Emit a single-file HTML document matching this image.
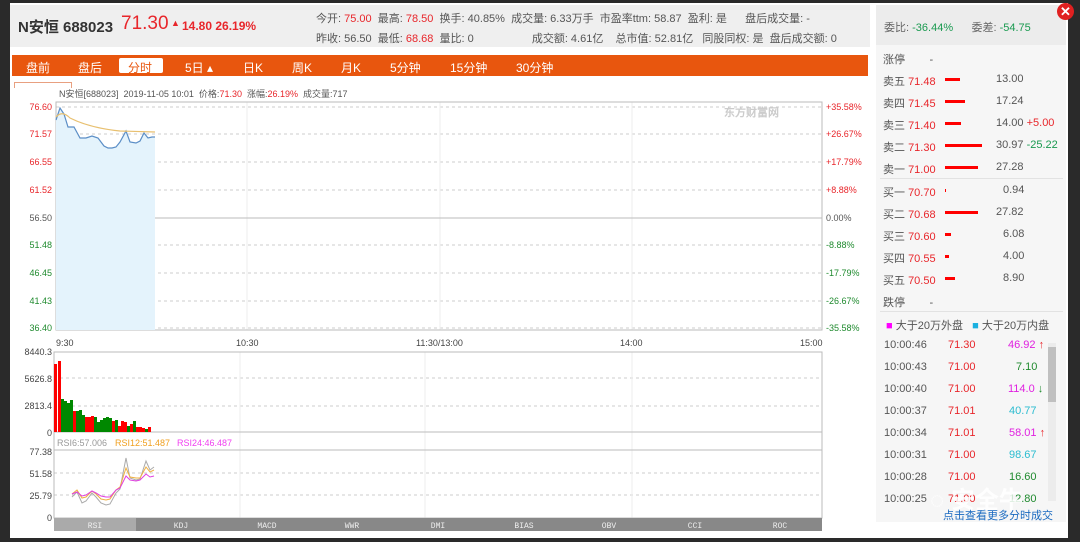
<!DOCTYPE html><html><head><meta charset="utf-8"><style>
*{margin:0;padding:0;box-sizing:border-box}
body{width:1080px;height:542px;background:#2a2a2a;position:relative;overflow:hidden;font-family:"Liberation Sans","Noto Sans CJK SC",sans-serif;font-size:11px;color:#333}
.a{position:absolute;white-space:nowrap}
.r{color:#e8262b}.g{color:#1f8a2e}.m{color:#e020e0}.c{color:#2bbcd0}
.bar{position:absolute;height:3px;background:#f00}
</style></head><body>
<div class="a" style="left:10px;top:3px;width:1058px;height:535px;background:#fff"></div>
<div class="a" style="left:10px;top:5px;width:860px;height:42px;background:#efefef"></div>
<div class="a" style="left:18px;top:16px;font-size:15px;font-weight:bold;color:#333">N安恒 688023</div>
<div class="a r" style="left:121px;top:13px;font-size:19px">71.30</div>
<div class="a r" style="left:171px;top:18px;font-size:9px">▲</div>
<div class="a r" style="left:182px;top:19px;font-size:12px;font-weight:bold">14.80 26.19%</div>
<div class="a" style="left:316px;top:9px;line-height:20px;font-size:11px;color:#555">今开: <span class="r">75.00</span>&nbsp; 最高: <span class="r">78.50</span>&nbsp; 换手: 40.85%&nbsp; 成交量: 6.33万手&nbsp; 市盈率ttm: 58.87&nbsp; 盈利: 是&nbsp;&nbsp;&nbsp;&nbsp;&nbsp; 盘后成交量: -<br>昨收: 56.50&nbsp; 最低: <span class="r">68.68</span>&nbsp; 量比: 0&nbsp;&nbsp;&nbsp;&nbsp;&nbsp;&nbsp;&nbsp;&nbsp;&nbsp;&nbsp;&nbsp;&nbsp;&nbsp;&nbsp;&nbsp;&nbsp;&nbsp;&nbsp; 成交额: 4.61亿&nbsp;&nbsp;&nbsp; 总市值: 52.81亿&nbsp;&nbsp; 同股同权: 是&nbsp; 盘后成交额: 0</div>
<div class="a" style="left:12px;top:55px;width:856px;height:21px;background:#e8560e"></div>
<div class="a" style="left:119px;top:58px;width:44px;height:15px;background:#fff;border-radius:2px"></div>
<div class="a" style="top:59px;left:0;font-size:12px;color:#fff">
<span class="a" style="left:26px">盘前</span><span class="a" style="left:78px">盘后</span><span class="a" style="left:128px;color:#e8560e">分时</span><span class="a" style="left:185px">5日 ▴</span><span class="a" style="left:243px">日K</span><span class="a" style="left:292px">周K</span><span class="a" style="left:341px">月K</span><span class="a" style="left:390px">5分钟</span><span class="a" style="left:450px">15分钟</span><span class="a" style="left:516px">30分钟</span></div>
<div class="a" style="left:14px;top:82px;width:58px;height:6px;border:1px solid #e8a080;border-bottom:none"></div>
<div class="a" style="left:59px;top:87px;font-size:9px;color:#555">N安恒[688023]&nbsp; 2019-11-05 10:01&nbsp; 价格:<span class="r">71.30</span>&nbsp; 涨幅:<span class="r">26.19%</span>&nbsp; 成交量:717</div>
<svg class="a" style="left:0;top:0" width="870" height="542" font-family="Liberation Sans" font-size="9">
<g stroke="#ccc" stroke-dasharray="3,3"><line x1="56" x2="822" y1="134" y2="134"/><line x1="56" x2="822" y1="162" y2="162"/><line x1="56" x2="822" y1="190" y2="190"/><line x1="56" x2="822" y1="245" y2="245"/><line x1="56" x2="822" y1="273" y2="273"/><line x1="56" x2="822" y1="301" y2="301"/><line x1="56" x2="822" y1="107" y2="107"/><line x1="56" x2="822" y1="328" y2="328"/>
<line x1="54" x2="822" y1="378" y2="378"/><line x1="54" x2="822" y1="406" y2="406"/><line x1="54" x2="822" y1="473" y2="473"/><line x1="54" x2="822" y1="495" y2="495"/></g>
<g stroke="#eee"><line x1="247" x2="247" y1="102" y2="330"/><line x1="440" x2="440" y1="102" y2="330"/><line x1="632" x2="632" y1="102" y2="330"/><line x1="240" x2="240" y1="352" y2="518"/><line x1="425" x2="425" y1="352" y2="518"/><line x1="632" x2="632" y1="352" y2="518"/></g>
<line x1="56" x2="822" y1="218" y2="218" stroke="#bbb"/>
<rect x="56" y="102" width="766" height="228" fill="none" stroke="#bbb"/>
<rect x="54" y="352" width="768" height="80" fill="none" stroke="#bbb"/>
<rect x="54" y="432" width="768" height="86" fill="none" stroke="#bbb"/>
<line x1="54" x2="822" y1="450" y2="450" stroke="#bbb"/>
<path d="M56 120 L60 108 L64 114 L68 127 L74 127 L80 138 L86 138 L92 136 L98 138 L104 146 L108 148 L112 148 L116 147 L120 142 L126 131 L130 142 L136 143 L140 141 L144 133 L148 138 L152 137 L155 137 L155 330 L56 330Z" fill="#e4f3fc"/>
<path d="M56 120 L60 108 L64 114 L68 127 L74 127 L80 138 L86 138 L92 136 L98 138 L104 146 L108 148 L112 148 L116 147 L120 142 L126 131 L130 142 L136 143 L140 141 L144 133 L148 138 L152 137 L155 137" fill="none" stroke="#5b8ec6" stroke-width="1.2"/>
<path d="M56 117 Q62 110 70 118 Q90 128 120 131 L155 132" fill="none" stroke="#e8c070" stroke-width="1.2"/>
<g text-anchor="end"><text x="52" y="110" fill="#e8262b">76.60</text><text x="52" y="137" fill="#e8262b">71.57</text><text x="52" y="165" fill="#e8262b">66.55</text><text x="52" y="193" fill="#e8262b">61.52</text><text x="52" y="221" fill="#555">56.50</text><text x="52" y="248" fill="#1f8a2e">51.48</text><text x="52" y="276" fill="#1f8a2e">46.45</text><text x="52" y="304" fill="#1f8a2e">41.43</text><text x="52" y="331" fill="#1f8a2e">36.40</text>
<text x="52" y="355" fill="#444">8440.3</text><text x="52" y="382" fill="#444">5626.8</text><text x="52" y="409" fill="#444">2813.4</text><text x="52" y="436" fill="#444">0</text>
<text x="52" y="455" fill="#444">77.38</text><text x="52" y="477" fill="#444">51.58</text><text x="52" y="499" fill="#444">25.79</text><text x="52" y="521" fill="#444">0</text></g>
<g><text x="826" y="110" fill="#e8262b">+35.58%</text><text x="826" y="137" fill="#e8262b">+26.67%</text><text x="826" y="165" fill="#e8262b">+17.79%</text><text x="826" y="193" fill="#e8262b">+8.88%</text><text x="826" y="221" fill="#555">0.00%</text><text x="826" y="248" fill="#1f8a2e">-8.88%</text><text x="826" y="276" fill="#1f8a2e">-17.79%</text><text x="826" y="304" fill="#1f8a2e">-26.67%</text><text x="826" y="331" fill="#1f8a2e">-35.58%</text></g>
<g fill="#444"><text x="56" y="346">9:30</text><text x="236" y="346">10:30</text><text x="416" y="346">11:30/13:00</text><text x="620" y="346">14:00</text><text x="800" y="346">15:00</text></g>
<text x="724" y="116" fill="#ccc" font-size="11" font-weight="bold">东方财富网</text>
<g>
<rect x="54" y="364" width="3" height="68" fill="#f00"/><rect x="58" y="361" width="3" height="71" fill="#f00"/><rect x="61" y="399" width="3" height="33" fill="#080"/><rect x="64" y="401" width="3" height="31" fill="#080"/><rect x="67" y="403" width="3" height="29" fill="#080"/><rect x="70" y="400" width="3" height="32" fill="#080"/><rect x="73" y="411" width="3" height="21" fill="#f00"/><rect x="76" y="411" width="3" height="21" fill="#080"/><rect x="79" y="410" width="3" height="22" fill="#080"/><rect x="82" y="415" width="3" height="17" fill="#080"/><rect x="85" y="417" width="3" height="15" fill="#f00"/><rect x="88" y="417" width="3" height="15" fill="#f00"/><rect x="91" y="416" width="3" height="16" fill="#f00"/><rect x="94" y="417" width="3" height="15" fill="#080"/><rect x="97" y="422" width="3" height="10" fill="#080"/><rect x="100" y="420" width="3" height="12" fill="#080"/><rect x="103" y="418" width="3" height="14" fill="#080"/><rect x="106" y="417" width="3" height="15" fill="#080"/><rect x="109" y="418" width="3" height="14" fill="#080"/><rect x="112" y="421" width="3" height="11" fill="#f00"/><rect x="115" y="420" width="3" height="12" fill="#080"/><rect x="118" y="426" width="3" height="6" fill="#f00"/><rect x="121" y="421" width="3" height="11" fill="#f00"/><rect x="124" y="422" width="3" height="10" fill="#f00"/><rect x="127" y="426" width="3" height="6" fill="#080"/><rect x="130" y="424" width="3" height="8" fill="#f00"/><rect x="133" y="421" width="3" height="11" fill="#080"/><rect x="136" y="427" width="3" height="5" fill="#f00"/><rect x="139" y="427" width="3" height="5" fill="#f00"/><rect x="142" y="428" width="3" height="4" fill="#f00"/><rect x="145" y="429" width="3" height="3" fill="#080"/><rect x="148" y="427" width="3" height="5" fill="#f00"/></g>
<text x="57" y="446" fill="#999">RSI6:57.006</text><text x="115" y="446" fill="#f0a020">RSI12:51.487</text><text x="177" y="446" fill="#f040f0">RSI24:46.487</text>
<path d="M72 497 L77 492 L82 503 L86 501 L92 493 L96 497 L101 503 L106 505 L110 504 L116 493 L120 489 L126 458 L130 478 L136 480 L140 479 L146 461 L150 470 L154 467" fill="none" stroke="#aaa"/>
<path d="M72 494 L77 490 L82 498 L86 497 L92 491 L96 494 L101 499 L106 500 L110 499 L116 490 L120 487 L126 468 L130 477 L136 478 L140 478 L146 467 L150 472 L154 470" fill="none" stroke="#f0b040"/>
<path d="M72 494 L77 492 L82 496 L86 495 L92 491 L96 493 L101 496 L106 497 L110 497 L116 490 L120 488 L126 476 L130 480 L136 481 L140 480 L146 474 L150 477 L154 476" fill="none" stroke="#e040e0"/>
<rect x="54" y="518" width="768" height="13" fill="#888"/><rect x="54" y="518" width="82" height="13" fill="#aaa"/>
<g fill="#eee" font-family="Liberation Mono" font-size="8" text-anchor="middle"><text x="95" y="528">RSI</text><text x="181" y="528">KDJ</text><text x="267" y="528">MACD</text><text x="352" y="528">WWR</text><text x="438" y="528">DMI</text><text x="524" y="528">BIAS</text><text x="609" y="528">OBV</text><text x="695" y="528">CCI</text><text x="780" y="528">ROC</text></g>
</svg>
<div class="a" style="left:876px;top:5px;width:190px;height:40px;background:#ececec"></div>
<div class="a" style="left:876px;top:45px;width:190px;height:477px;background:#f6f6f6"></div>
<div class="a" style="left:1057px;top:3px;width:17px;height:17px;border-radius:50%;background:#e02020;color:#fff;font-size:13px;font-weight:bold;text-align:center;line-height:17px">✕</div>
<div class="a" style="left:884px;top:19px;font-size:11px;color:#666">委比: <span style="color:#1a9a50">-36.44%</span>&nbsp;&nbsp;&nbsp;&nbsp;&nbsp; 委差: <span style="color:#1a9a50">-54.75</span></div>
<div class="a" style="left:880px;top:178px;width:183px;height:1px;background:#e2e2e2"></div>
<div class="a" style="left:880px;top:311px;width:183px;height:1px;background:#e2e2e2"></div>
<div style="font-size:11px;color:#555">
<div class="a" style="left:883px;top:51px">涨停&nbsp;&nbsp;&nbsp;&nbsp;&nbsp;&nbsp;&nbsp; -</div>
<div class="a" style="left:883px;top:73px">卖五 <span class="r">71.48</span></div><div class="bar" style="left:945px;top:78px;width:15px"></div><div class="a" style="left:996px;top:73px">13.00</div>
<div class="a" style="left:883px;top:95px">卖四 <span class="r">71.45</span></div><div class="bar" style="left:945px;top:100px;width:20px"></div><div class="a" style="left:996px;top:95px">17.24</div>
<div class="a" style="left:883px;top:117px">卖三 <span class="r">71.40</span></div><div class="bar" style="left:945px;top:122px;width:16px"></div><div class="a" style="left:996px;top:117px">14.00 <span class="r">+5.00</span></div>
<div class="a" style="left:883px;top:139px">卖二 <span class="r">71.30</span></div><div class="bar" style="left:945px;top:144px;width:37px"></div><div class="a" style="left:996px;top:139px">30.97 <span style="color:#1a9a50">-25.22</span></div>
<div class="a" style="left:883px;top:161px">卖一 <span class="r">71.00</span></div><div class="bar" style="left:945px;top:166px;width:33px"></div><div class="a" style="left:996px;top:161px">27.28</div>
<div class="a" style="left:883px;top:184px">买一 <span class="r">70.70</span></div><div class="bar" style="left:945px;top:189px;width:1px"></div><div class="a" style="left:1003px;top:184px">0.94</div>
<div class="a" style="left:883px;top:206px">买二 <span class="r">70.68</span></div><div class="bar" style="left:945px;top:211px;width:33px"></div><div class="a" style="left:996px;top:206px">27.82</div>
<div class="a" style="left:883px;top:228px">买三 <span class="r">70.60</span></div><div class="bar" style="left:945px;top:233px;width:6px"></div><div class="a" style="left:1003px;top:228px">6.08</div>
<div class="a" style="left:883px;top:250px">买四 <span class="r">70.55</span></div><div class="bar" style="left:945px;top:255px;width:4px"></div><div class="a" style="left:1003px;top:250px">4.00</div>
<div class="a" style="left:883px;top:272px">买五 <span class="r">70.50</span></div><div class="bar" style="left:945px;top:277px;width:10px"></div><div class="a" style="left:1003px;top:272px">8.90</div>
<div class="a" style="left:883px;top:294px">跌停&nbsp;&nbsp;&nbsp;&nbsp;&nbsp;&nbsp;&nbsp; -</div>
<div class="a" style="left:886px;top:317px"><span style="color:#f0f">■</span> 大于20万外盘&nbsp;&nbsp; <span style="color:#1ab0e0">■</span> 大于20万内盘</div>
</div>
<div class="a" style="left:1048px;top:343px;width:8px;height:158px;background:#ececec"></div>
<div class="a" style="left:1048px;top:347px;width:8px;height:55px;background:#c0c0c0"></div>
<div style="font-size:11px;color:#555">
<div class="a" style="left:884px;top:339px">10:00:46</div><div class="a r" style="left:948px;top:339px">71.30</div><div class="a m" style="left:1008px;top:339px">46.92 <span class="r">↑</span></div>
<div class="a" style="left:884px;top:361px">10:00:43</div><div class="a r" style="left:948px;top:361px">71.00</div><div class="a g" style="left:1016px;top:361px">7.10</div>
<div class="a" style="left:884px;top:383px">10:00:40</div><div class="a r" style="left:948px;top:383px">71.00</div><div class="a m" style="left:1008px;top:383px">114.0 <span class="g">↓</span></div>
<div class="a" style="left:884px;top:405px">10:00:37</div><div class="a r" style="left:948px;top:405px">71.01</div><div class="a c" style="left:1009px;top:405px">40.77</div>
<div class="a" style="left:884px;top:427px">10:00:34</div><div class="a r" style="left:948px;top:427px">71.01</div><div class="a m" style="left:1009px;top:427px">58.01 <span class="r">↑</span></div>
<div class="a" style="left:884px;top:449px">10:00:31</div><div class="a r" style="left:948px;top:449px">71.00</div><div class="a c" style="left:1009px;top:449px">98.67</div>
<div class="a" style="left:884px;top:471px">10:00:28</div><div class="a r" style="left:948px;top:471px">71.00</div><div class="a g" style="left:1009px;top:471px">16.60</div>
<div class="a" style="left:884px;top:493px">10:00:25</div><div class="a r" style="left:948px;top:493px">71.00</div><div class="a g" style="left:1009px;top:493px">12.80</div>
</div>
<div class="a" style="left:930px;top:480px;font-size:24px;color:rgba(255,255,255,.85);font-weight:bold">◌ 安全牛</div>
<div class="a" style="left:943px;top:507px;font-size:11px;color:#1a6ac0">点击查看更多分时成交</div>
</body></html>
